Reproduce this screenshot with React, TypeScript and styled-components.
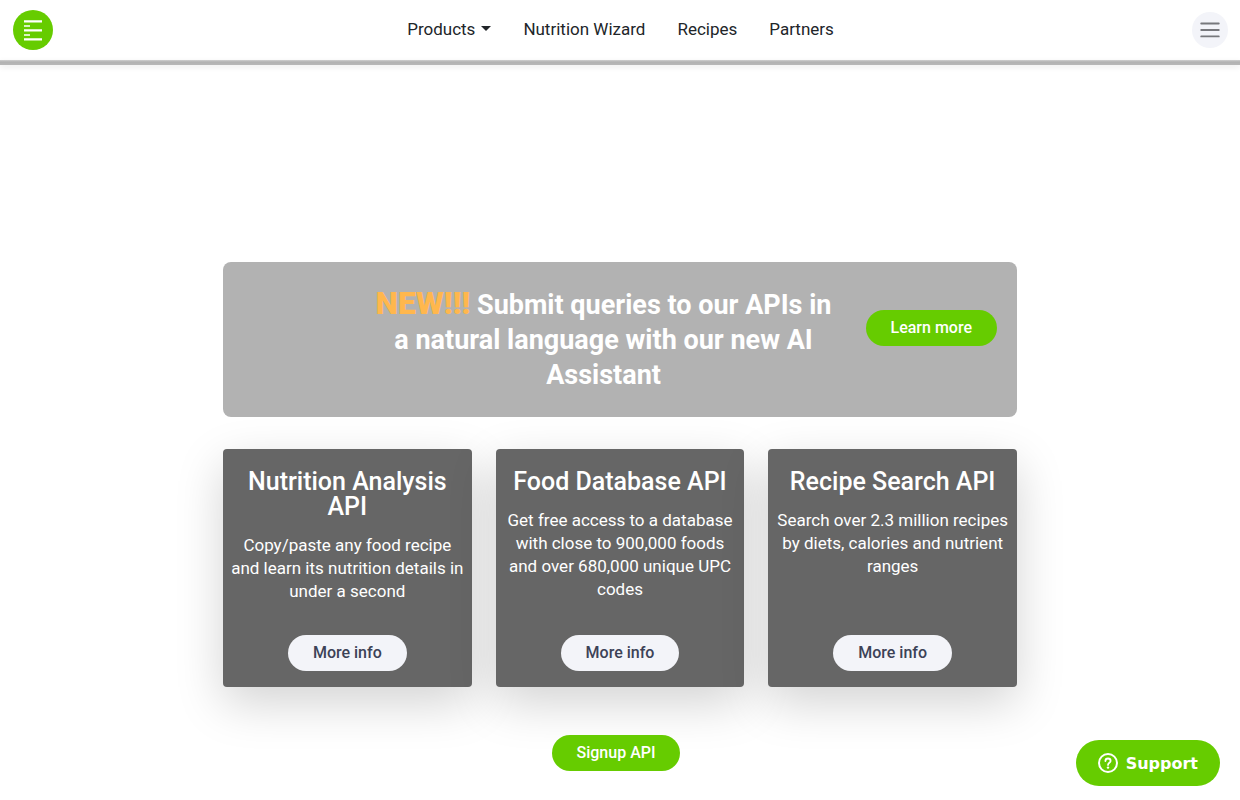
import React from "react";
import styled, { createGlobalStyle } from "styled-components";

const GlobalStyle = createGlobalStyle`
  *, *::before, *::after { box-sizing: border-box; }
  body {
    margin: 0;
    background: #fff;
    color: #212529;
    font-family: Roboto, "Liberation Sans", sans-serif;
    font-size: 17px;
    line-height: 23px;
    overflow-x: hidden;
  }
  h1, h2, p { margin: 0; }
  button { font: inherit; border: 0; cursor: pointer; }
`;

const Header = styled.header`
  display: grid;
  grid-template-columns: 1fr auto 1fr;
  align-items: center;
  height: 60px;
  padding: 0 12px 0 13px;
  background: #fff;
`;

const Logo = styled.a`
  display: block;
  width: 40px;
  height: 40px;
`;

const Nav = styled.nav`
  display: flex;
  gap: 32px;
  padding-bottom: 2px;
`;

const NavLink = styled.a`
  color: #212529;
  text-decoration: none;
`;

const NavButton = styled.button`
  display: flex;
  align-items: center;
  gap: 6px;
  padding: 0;
  background: none;
  color: #212529;
`;

const MenuButton = styled.button`
  display: flex;
  align-items: center;
  justify-content: center;
  justify-self: end;
  width: 36px;
  height: 36px;
  padding: 0;
  border-radius: 50%;
  background: #f3f4f9;
`;

const HeroStrip = styled.div`
  height: 5px;
  background: linear-gradient(#d0d0d0, #b2b2b2 40%, #b8b8b8);
  box-shadow: 0 2px 6px rgba(0, 0, 0, 0.08);
`;

const Main = styled.main`
  display: flex;
  flex-direction: column;
  max-width: 794px;
  margin: 0 auto;
  padding: 197px 0 29px;
`;

const Banner = styled.section`
  display: flex;
  justify-content: flex-end;
  gap: 24px;
  padding: 24px 20px;
  border-radius: 8px;
  background: #b2b2b2;
`;

const BannerTitle = styled.h1`
  flex: 0 1 476px;
  color: #fff;
  font-size: 27px;
  font-weight: 700;
  line-height: 35px;
  text-align: center;
`;

const Highlight = styled.span`
  color: #ffb74d;
  font-size: 32px;
  font-weight: 900;
`;

const PillButton = styled.button<{ $tone: "green" | "light" }>`
  flex: none;
  height: 36px;
  padding: 0 25px 1px;
  border-radius: 18px;
  background: ${({ $tone }) => ($tone === "green" ? "#66cc00" : "#f3f4f9")};
  color: ${({ $tone }) => ($tone === "green" ? "#fff" : "#3c4257")};
  font-size: 16px;
  font-weight: 500;
  white-space: nowrap;
`;

const BannerAction = styled.div`
  padding-top: 24px;
`;

const Cards = styled.section`
  display: grid;
  grid-template-columns: repeat(3, 1fr);
  gap: 24px;
  margin-top: 32px;
`;

const Card = styled.article`
  display: flex;
  flex-direction: column;
  align-items: center;
  min-height: 238px;
  padding: 20px 8px 16px;
  border-radius: 4px;
  background: #666;
  box-shadow: 0 16px 48px rgba(0, 0, 0, 0.175);
  color: #fff;
  text-align: center;
`;

const CardTitle = styled.h2`
  margin-bottom: 15px;
  font-size: 25px;
  font-weight: 500;
  line-height: 25px;
`;

const CardText = styled.p`
  flex: 1;
`;

const Signup = styled.div`
  display: flex;
  justify-content: center;
  margin-top: 48px;
  padding-right: 8px;
`;

const SupportButton = styled.button`
  position: fixed;
  right: 20px;
  bottom: 14px;
  display: flex;
  align-items: center;
  gap: 8px;
  height: 46px;
  padding: 0 22px;
  border-radius: 23px;
  background: #66cc00;
  color: #fff;
  font-family: "DejaVu Sans", sans-serif;
  font-size: 16px;
  font-weight: 700;
`;

const apis = [
  {
    title: "Nutrition Analysis API",
    text: "Copy/paste any food recipe and learn its nutrition details in under a second",
  },
  {
    title: "Food Database API",
    text: "Get free access to a database with close to 900,000 foods and over 680,000 unique UPC codes",
  },
  {
    title: "Recipe Search API",
    text: "Search over 2.3 million recipes by diets, calories and nutrient ranges",
  },
];

function LogoMark() {
  return (
    <svg width="40" height="40" viewBox="0 0 40 40" aria-hidden="true">
      <circle cx="20" cy="20" r="20" fill="#66cc00" />
      <path
        d="M11 11.4h18M11 20.4h18M11 29.4h18"
        stroke="#fff"
        strokeWidth="2.2"
      />
      <path d="M11 16h6M11 25h6" stroke="#fff" strokeWidth="1.4" />
    </svg>
  );
}

function Caret() {
  return (
    <svg width="10" height="6" viewBox="0 0 10 6" aria-hidden="true">
      <path d="M0 0h10L5 5z" fill="#212529" />
    </svg>
  );
}

function MenuIcon() {
  return (
    <svg width="20" height="16" viewBox="0 0 20 16" aria-hidden="true">
      <path
        d="M1.2 1.5h17.6M1.2 8h17.6M1.2 14.4h17.6"
        stroke="#77787c"
        strokeWidth="1.8"
        strokeLinecap="round"
      />
    </svg>
  );
}

function HelpIcon() {
  return (
    <svg width="20" height="20" viewBox="0 0 20 20" fill="none" aria-hidden="true">
      <circle cx="10" cy="10" r="9" stroke="#fff" strokeWidth="2" />
      <path
        d="M7.4 8c0-1.5 1.1-2.5 2.6-2.5s2.6 1 2.6 2.4c0 1.8-2.6 2-2.6 4"
        stroke="#fff"
        strokeWidth="1.8"
        strokeLinecap="round"
      />
      <circle cx="10" cy="14.6" r="1.2" fill="#fff" />
    </svg>
  );
}

export default function App() {
  return (
    <>
      <GlobalStyle />
      <Header>
        <Logo href="#" aria-label="Home">
          <LogoMark />
        </Logo>
        <Nav>
          <NavButton type="button">
            Products <Caret />
          </NavButton>
          <NavLink href="#wizard">Nutrition Wizard</NavLink>
          <NavLink href="#recipes">Recipes</NavLink>
          <NavLink href="#partners">Partners</NavLink>
        </Nav>
        <MenuButton type="button" aria-label="Menu">
          <MenuIcon />
        </MenuButton>
      </Header>
      <HeroStrip />
      <Main>
        <Banner>
          <BannerTitle>
            <Highlight>NEW!!!</Highlight> Submit queries to our APIs in a natural
            language with our new AI Assistant
          </BannerTitle>
          <BannerAction>
            <PillButton type="button" $tone="green">
              Learn more
            </PillButton>
          </BannerAction>
        </Banner>
        <Cards>
          {apis.map((api) => (
            <Card key={api.title}>
              <CardTitle>{api.title}</CardTitle>
              <CardText>{api.text}</CardText>
              <PillButton type="button" $tone="light">
                More info
              </PillButton>
            </Card>
          ))}
        </Cards>
        <Signup>
          <PillButton type="button" $tone="green">
            Signup API
          </PillButton>
        </Signup>
      </Main>
      <SupportButton type="button">
        <HelpIcon />
        Support
      </SupportButton>
    </>
  );
}
